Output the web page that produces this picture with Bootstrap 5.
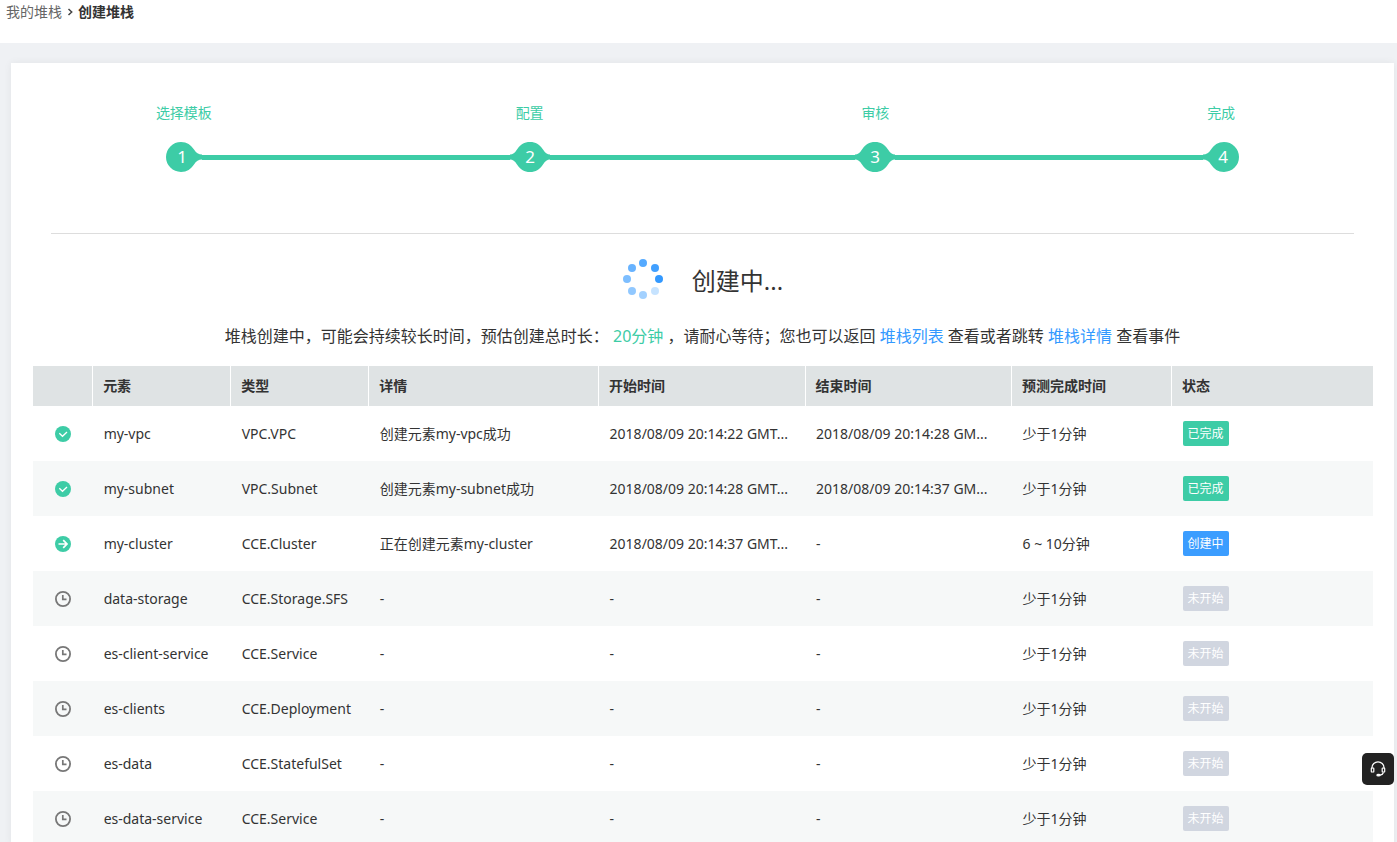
<!DOCTYPE html>
<html lang="zh-CN">
<head>
<meta charset="utf-8">
<meta name="viewport" content="width=device-width, initial-scale=1">
<title>创建堆栈</title>
<link href="https://cdn.jsdelivr.net/npm/bootstrap@5.3.0/dist/css/bootstrap.min.css" rel="stylesheet">
<style>
  :root { --teal: #3dcca6; --blue: #3399ff; --ink: #333; }
  body { background: #eff1f4; color: var(--ink); font: 14px/20px "Noto Sans", "Noto Sans CJK SC", sans-serif; }
  a { text-decoration: none; }
  .topbar { height: 43px; padding: 2px 6px; background: #fff; }
  .topbar a { color: #666; }
  .topbar .breadcrumb { gap: 4px; }
  .panel { margin: 20px 3px 0 11px; background: #fff; box-shadow: 0 0 8px rgba(0, 0, 0, .06); }
  .steps { padding-top: 40px; color: var(--teal); }
  .step-track { height: 30px; margin-top: 19px; }
  .step-line { height: 5px; background: var(--teal); }
  .step-track svg { fill: var(--teal); display: block; }
  .step-track svg text { fill: #fff; font-size: 17px; text-anchor: middle; }
  .divider { margin: 61px 40px 0; border-color: #ccc; opacity: 1; border-top: 1px solid #ddd; }
  .progress-title { gap: 28px; margin-top: 24px; }
  .progress-title h1 { font-size: 24px; line-height: 32px; font-weight: 400; margin: 4px 0 0; }
  .hint { font-size: 16px; line-height: 24px; margin: 24px 0 18px; }
  .hint a { color: var(--blue); }
  .hint span { color: var(--teal); }
  .table-wrap { padding: 0 21px 0 22px; }
  .resources { table-layout: fixed; margin: 0; --bs-table-bg: transparent; --bs-table-color: #333; --bs-table-striped-color: #333; color: var(--ink); }
  .resources th, .resources td { padding: 0 10px; border: 0; white-space: nowrap; vertical-align: middle; }
  .resources th { height: 40px; background: #dfe3e4; }
  .resources th + th { border-left: 1px solid #fff; }
  .resources td { height: 55px; padding-left: 11px; }
  .resources tbody tr:nth-child(even) { background: #f6f8f8; }
  .resources svg { display: block; margin: 1px auto 0; }
  .c-icon { width: 4.45%; } .c-name, .c-type { width: 10.3%; } .c-info { width: 17.16%; }
  .c-start, .c-end { width: 15.41%; } .c-eta { width: 11.94%; }
  .state { display: inline-block; height: 25px; line-height: 25px; padding: 0 5px; font-size: 12px; color: #fff; border-radius: 2px; vertical-align: middle; }
  .state-done { background: var(--teal); } .state-run { background: #3b9dff; } .state-wait { background: #d1d6e0; }
  .support { right: 3px; bottom: 57px; width: 32px; height: 32px; background: #222; border: 0; border-radius: 5px; }
</style>
</head>
<body>
<svg class="d-none" aria-hidden="true">
  <symbol id="done" viewBox="0 0 16 16"><circle cx="8" cy="8" r="8" fill="#3dcca6"/><path d="M4.3 7.3 7.5 10.3 12 6" fill="none" stroke="#fff" stroke-width="1.3"/></symbol>
  <symbol id="run" viewBox="0 0 16 16"><circle cx="8" cy="8" r="8" fill="#3dcca6"/><path d="M3.5 8H12M8.2 4.2 12 8 8.2 11.8" fill="none" stroke="#fff" stroke-width="1.7"/></symbol>
  <symbol id="wait" viewBox="0 0 16 16"><circle cx="8" cy="8" r="7.1" fill="none" stroke="#777" stroke-width="1.8"/><path d="M7.8 4V8.4H11.5" fill="none" stroke="#777" stroke-width="1.7"/></symbol>
</svg>

<nav class="topbar" aria-label="breadcrumb">
  <div class="breadcrumb d-flex align-items-center m-0">
    <a href="#">我的堆栈</a>
    <svg width="8" height="8" viewBox="0 0 8 8" fill="none" stroke="#444" stroke-width="1.5"><path d="M2.5 1 5.7 4 2.5 7"/></svg>
    <strong>创建堆栈</strong>
  </div>
</nav>

<main class="panel">
  <div class="steps row g-0 text-center">
    <div class="col-3">
      <div>选择模板</div>
      <div class="step-track d-flex align-items-center">
        <div class="flex-fill"></div>
        <svg width="36" height="30" viewBox="0 0 36 30"><path d="M15 0C21 0 25 3 28 7.500Q31 12.500 36 12.500V17.500Q31 17.500 28 22.500C25 27 21 30 15 30A15 15 0 0 1 15 0Z"/><text x="16" y="21">1</text></svg>
        <div class="step-line flex-fill"></div>
      </div>
    </div>
    <div class="col-3">
      <div>配置</div>
      <div class="step-track d-flex align-items-center">
        <div class="step-line flex-fill"></div>
        <svg width="40" height="30" viewBox="0 0 40 30"><path id="mid" d="M0 12.500Q4 12.500 7 7.500C11 2 14 0 20 0S29 2 33 7.500Q36 12.500 40 12.500V17.500Q36 17.500 33 22.500C29 28 26 30 20 30S11 28 7 22.500Q4 17.500 0 17.500Z"/><text x="20" y="21">2</text></svg>
        <div class="step-line flex-fill"></div>
      </div>
    </div>
    <div class="col-3">
      <div>审核</div>
      <div class="step-track d-flex align-items-center">
        <div class="step-line flex-fill"></div>
        <svg width="40" height="30" viewBox="0 0 40 30"><use href="#mid"/><text x="20" y="21">3</text></svg>
        <div class="step-line flex-fill"></div>
      </div>
    </div>
    <div class="col-3">
      <div>完成</div>
      <div class="step-track d-flex align-items-center">
        <div class="step-line flex-fill"></div>
        <svg width="36" height="30" viewBox="0 0 36 30"><path d="M21 0C15 0 11 3 8 7.500Q5 12.500 0 12.500V17.500Q5 17.500 8 22.500C11 27 15 30 21 30A15 15 0 0 0 21 0Z"/><text x="20" y="21">4</text></svg>
        <div class="flex-fill"></div>
      </div>
    </div>
  </div>
  <hr class="divider">

  <div class="progress-title d-flex justify-content-center align-items-center">
    <svg width="42" height="42" viewBox="-21 -21 42 42" fill="#3399ff">
      <circle cx="16" cy="0" r="4"/><circle cx="12" cy="-11" r="4" opacity=".93"/><circle cx="0" cy="-16" r="4" opacity=".83"/><circle cx="-11" cy="-11" r="4" opacity=".74"/><circle cx="-16" cy="0" r="4" opacity=".64"/><circle cx="-11" cy="12" r="4" opacity=".54"/><circle cx="0" cy="16" r="4" opacity=".45"/><circle cx="12" cy="12" r="4" opacity=".28"/>
    </svg>
    <h1>创建中...</h1>
  </div>
  <p class="hint text-center">堆栈创建中，可能会持续较长时间，预估创建总时长： <span>20分钟</span> ，请耐心等待；您也可以返回 <a href="#">堆栈列表</a> 查看或者跳转 <a href="#">堆栈详情</a> 查看事件</p>

  <div class="table-wrap">
    <table class="table resources">
      <thead>
        <tr><th class="c-icon"></th><th class="c-name">元素</th><th class="c-type">类型</th><th class="c-info">详情</th><th class="c-start">开始时间</th><th class="c-end">结束时间</th><th class="c-eta">预测完成时间</th><th>状态</th></tr>
      </thead>
      <tbody>
        <tr><td><svg width="16" height="16"><use href="#done"/></svg></td><td>my-vpc</td><td>VPC.VPC</td><td>创建元素my-vpc成功</td><td>2018/08/09 20:14:22 GMT...</td><td>2018/08/09 20:14:28 GM...</td><td>少于1分钟</td><td><span class="state state-done">已完成</span></td></tr>
        <tr><td><svg width="16" height="16"><use href="#done"/></svg></td><td>my-subnet</td><td>VPC.Subnet</td><td>创建元素my-subnet成功</td><td>2018/08/09 20:14:28 GMT...</td><td>2018/08/09 20:14:37 GM...</td><td>少于1分钟</td><td><span class="state state-done">已完成</span></td></tr>
        <tr><td><svg width="16" height="16"><use href="#run"/></svg></td><td>my-cluster</td><td>CCE.Cluster</td><td>正在创建元素my-cluster</td><td>2018/08/09 20:14:37 GMT...</td><td>-</td><td>6 ~ 10分钟</td><td><span class="state state-run">创建中</span></td></tr>
        <tr><td><svg width="16" height="16"><use href="#wait"/></svg></td><td>data-storage</td><td>CCE.Storage.SFS</td><td>-</td><td>-</td><td>-</td><td>少于1分钟</td><td><span class="state state-wait">未开始</span></td></tr>
        <tr><td><svg width="16" height="16"><use href="#wait"/></svg></td><td>es-client-service</td><td>CCE.Service</td><td>-</td><td>-</td><td>-</td><td>少于1分钟</td><td><span class="state state-wait">未开始</span></td></tr>
        <tr><td><svg width="16" height="16"><use href="#wait"/></svg></td><td>es-clients</td><td>CCE.Deployment</td><td>-</td><td>-</td><td>-</td><td>少于1分钟</td><td><span class="state state-wait">未开始</span></td></tr>
        <tr><td><svg width="16" height="16"><use href="#wait"/></svg></td><td>es-data</td><td>CCE.StatefulSet</td><td>-</td><td>-</td><td>-</td><td>少于1分钟</td><td><span class="state state-wait">未开始</span></td></tr>
        <tr><td><svg width="16" height="16"><use href="#wait"/></svg></td><td>es-data-service</td><td>CCE.Service</td><td>-</td><td>-</td><td>-</td><td>少于1分钟</td><td><span class="state state-wait">未开始</span></td></tr>
      </tbody>
    </table>
  </div>
</main>

<button type="button" class="support position-fixed d-flex align-items-center justify-content-center p-0" aria-label="在线客服">
  <svg width="16" height="16" viewBox="0 0 16 16" fill="none" stroke="#fff" stroke-width="1.2"><path d="M2 7.500V6.500A6 5.700 0 0 1 14 6.500V7.500"/><rect x="1.300" y="7" width="2.500" height="4" rx=".6"/><rect x="12.200" y="7" width="2.500" height="4" rx=".6"/><path d="M13.500 11.500C13 13 12 14 10 14.200"/><ellipse cx="8.500" cy="14.200" rx="1.600" ry=".8" fill="#fff"/></svg>
</button>
<script src="https://cdn.jsdelivr.net/npm/bootstrap@5.3.0/dist/js/bootstrap.bundle.min.js"></script>
</body>
</html>
